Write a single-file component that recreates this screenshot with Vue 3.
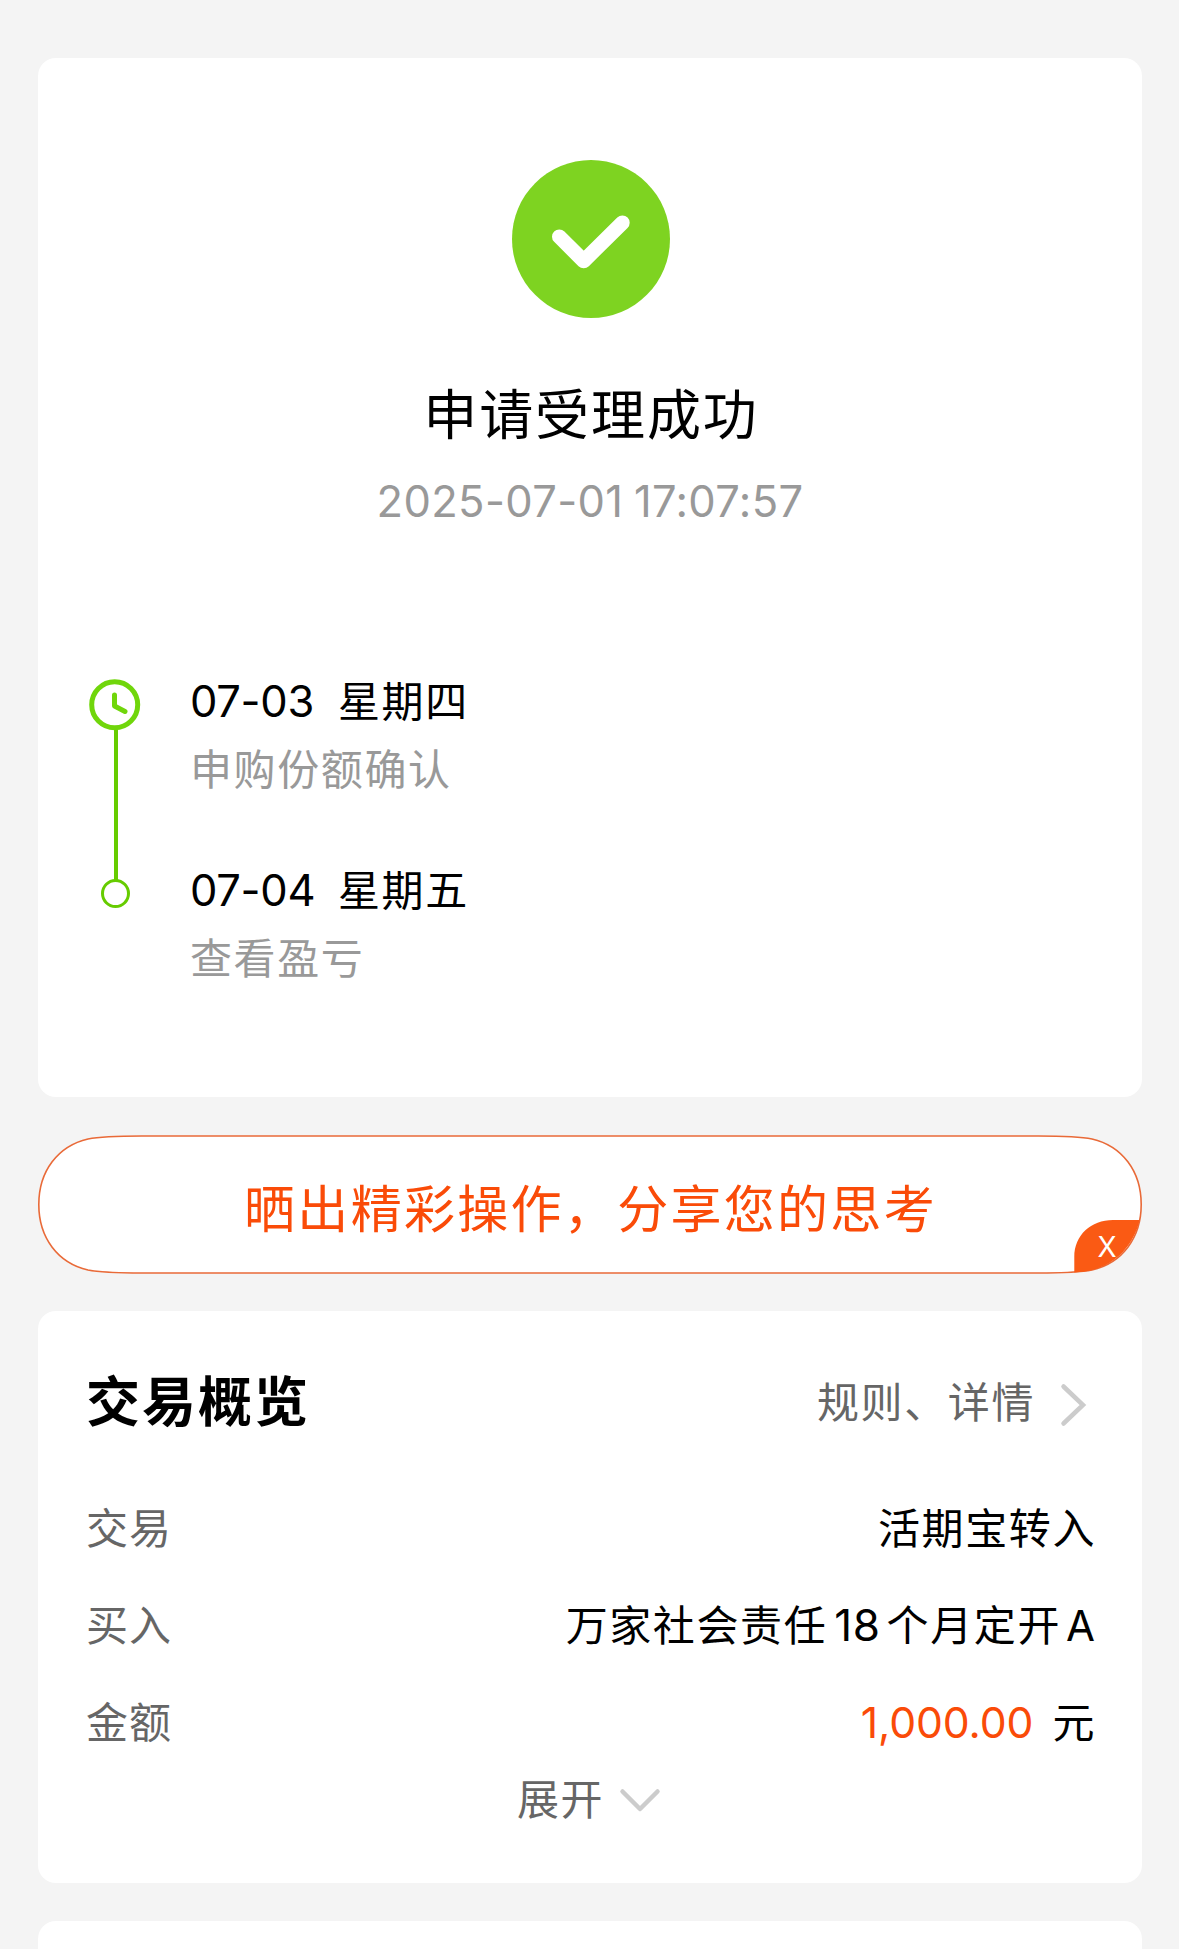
<script setup>
import { ref } from 'vue'

const steps = [
  { date: '07-03', week: '星期四', desc: '申购份额确认' },
  { date: '07-04', week: '星期五', desc: '查看盈亏' }
]

const showBanner = ref(true)

const closeBanner = () => {
  showBanner.value = false
}
</script>

<template>
  <main class="page">
    <section class="card result">
      <svg class="result-icon" viewBox="0 0 158 158">
        <circle cx="79" cy="79" r="79" fill="#7ed321" />
        <path d="M47.3 76.7 71.7 101 110.4 62.7" fill="none" stroke="#fff" stroke-width="14.6" stroke-linecap="round" stroke-linejoin="round" />
      </svg>
      <h1 class="result-title">申请受理成功</h1>
      <p class="result-time">2025-07-01 17:07:57</p>

      <ul class="steps">
        <li v-for="(step, i) in steps" :key="step.date" class="step">
          <div class="step-mark">
            <svg v-if="i === 0" class="clock" viewBox="0 0 52 52">
              <circle cx="25.7" cy="25.7" r="23" fill="none" stroke="#70d60b" stroke-width="5" />
              <path d="M25.5 16V27L36 32.5" fill="none" stroke="#70d60b" stroke-width="5" stroke-linecap="round" stroke-linejoin="round" />
            </svg>
            <span v-if="i === 0" class="step-line"></span>
            <span v-else class="dot"></span>
          </div>
          <div class="step-body">
            <div class="step-head">
              <span class="step-date">{{ step.date }}</span>
              <span>{{ step.week }}</span>
            </div>
            <div class="step-desc">{{ step.desc }}</div>
          </div>
        </li>
      </ul>
    </section>

    <section v-if="showBanner" class="banner">
      <svg class="banner-shape" viewBox="0 0 1104 139">
        <path
          d="M104 1C75 1 62 1.5 50 4C20 11 .8 36 .8 69.5S20 128 50 135C62 137.5 75 138 104 138H1000C1029 138 1042 137.5 1054 135C1084 128 1103.2 103 1103.2 69.5S1084 11 1054 4C1042 1.5 1029 1 1000 1Z"
          fill="#fff"
          stroke="#e96a38"
          stroke-width="1.6"
        />
        <path d="M1036.3 137.5V122C1036.3 100 1053 85 1075 85H1101.6C1096 109 1079 129 1054 135C1048 136.5 1043 137 1036.3 137.5Z" fill="#fa5a14" />
      </svg>
      <span class="banner-text">晒出精彩操作，分享您的思考</span>
      <button class="banner-close" @click="closeBanner">X</button>
    </section>

    <section class="card overview">
      <header class="overview-header">
        <h2>交易概览</h2>
        <a class="overview-link">
          规则、详情
          <svg class="arrow-right" viewBox="0 0 28 44">
            <path d="M3.5 3.5 23 22 3.5 40.5" fill="none" stroke="#ccc" stroke-width="4.5" stroke-linecap="round" />
          </svg>
        </a>
      </header>
      <div class="row">
        <span class="label">交易</span>
        <span class="value">活期宝转入</span>
      </div>
      <div class="row">
        <span class="label">买入</span>
        <span class="value">万家社会责任<span class="num">18</span>个月定开<span class="num-a">A</span></span>
      </div>
      <div class="row">
        <span class="label">金额</span>
        <span class="value"><span class="amount">1,000.00</span>元</span>
      </div>
      <div class="expand">
        展开
        <svg class="arrow-down" viewBox="0 0 42 26">
          <path d="M3.5 3.5 21 21 38.5 3.5" fill="none" stroke="#ccc" stroke-width="4.5" stroke-linecap="round" stroke-linejoin="round" />
        </svg>
      </div>
    </section>

    <section class="card next"></section>
  </main>
</template>

<style>
body {
  margin: 0;
  background: #f4f4f4;
}
</style>

<style scoped>
.page {
  box-sizing: border-box;
  width: 1179px;
  height: 1949px;
  padding: 58px 37px 0 38px;
  overflow: hidden;
  background: #f4f4f4;
  color: #000;
  font-family: Inter, "Noto Sans CJK SC", sans-serif;
  font-size: 42px;
  letter-spacing: 1.6px;
}

.card {
  box-sizing: border-box;
  background: #fff;
  border-radius: 18px;
}

.result {
  display: flex;
  flex-direction: column;
  align-items: center;
  height: 1039px;
  padding-top: 102px;
}

.result-icon {
  width: 158px;
  height: 158px;
  margin-left: 2px;
}

.result-title {
  margin: 60px 0 0 2px;
  font-size: 54px;
  font-weight: 400;
  line-height: 76px;
  letter-spacing: 1.9px;
}

.result-time {
  margin: 17px 0 0;
  color: #999;
  font-size: 43.5px;
  line-height: 60px;
  letter-spacing: 0.35px;
  word-spacing: -2px;
}

.steps {
  align-self: stretch;
  margin: 139px 0 0;
  padding: 0 0 0 51px;
  list-style: none;
}

.step {
  display: flex;
  height: 189px;
}

.step-mark {
  display: flex;
  flex-direction: column;
  align-items: center;
  width: 52px;
  padding-top: 9px;
}

.clock {
  flex: none;
  width: 52px;
  height: 52px;
}

.step-line {
  flex: none;
  width: 4px;
  height: 151px;
  margin: -1px 0 0 2px;
  background: #66cc00;
}

.dot {
  box-sizing: border-box;
  width: 29px;
  height: 29px;
  margin: 11px 0 0 1px;
  border: 3px solid #66cc00;
  border-radius: 50%;
}

.step-body {
  margin-left: 49px;
}

.step-head {
  display: flex;
  line-height: 64px;
}

.step-date {
  width: 148px;
  margin-top: -1px;
  font-size: 43.5px;
  letter-spacing: -0.3px;
}

.step-desc {
  margin-top: 4px;
  color: #999;
  line-height: 64px;
}

.banner {
  position: relative;
  display: flex;
  align-items: center;
  justify-content: center;
  height: 139px;
  margin-top: 38px;
}

.banner-shape {
  position: absolute;
  top: 0;
  left: 0;
  width: 1104px;
  height: 139px;
}

.banner-text {
  position: relative;
  margin: 2px 0 0 1px;
  color: #fa4b08;
  font-size: 51px;
  letter-spacing: 2.3px;
}

.banner-close {
  position: absolute;
  right: 19px;
  bottom: 7px;
  width: 32px;
  padding: 0;
  border: none;
  background: transparent;
  color: #fff;
  font-family: Inter, sans-serif;
  font-size: 28px;
  font-weight: 400;
  line-height: 40px;
}

.overview {
  height: 572px;
  margin-top: 37px;
  padding: 43px 46px 0 48px;
}

.overview-header {
  display: flex;
  align-items: center;
  justify-content: space-between;
  height: 88px;
}

.overview-header h2 {
  margin: 0;
  font-size: 54px;
  font-weight: 700;
  letter-spacing: 2px;
}

.overview-link {
  display: flex;
  align-items: center;
  margin-top: 9px;
  color: #666;
  line-height: 60px;
}

.arrow-right {
  width: 28px;
  height: 44px;
  margin: 4px 8px 0 25px;
}

.row {
  display: flex;
  align-items: center;
  justify-content: space-between;
  height: 64px;
  margin-bottom: 33px;
}

.overview-header + .row {
  margin-top: 51px;
}

.label {
  color: #666;
  letter-spacing: 1px;
}

.num {
  margin: 0 6px 0 7px;
  font-size: 44px;
  letter-spacing: 0.6px;
}

.num-a {
  margin: 0 1px 0 5px;
  letter-spacing: 0;
}

.amount {
  margin-right: 19px;
  color: #fa4b08;
  font-size: 42.7px;
  letter-spacing: -0.1px;
}

.expand {
  display: flex;
  align-items: center;
  justify-content: center;
  height: 64px;
  margin-top: -20px;
  color: #666;
}

.arrow-down {
  width: 42px;
  height: 26px;
  margin: 9px 4px 0 15px;
}

.next {
  height: 100px;
  margin-top: 38px;
}
</style>
